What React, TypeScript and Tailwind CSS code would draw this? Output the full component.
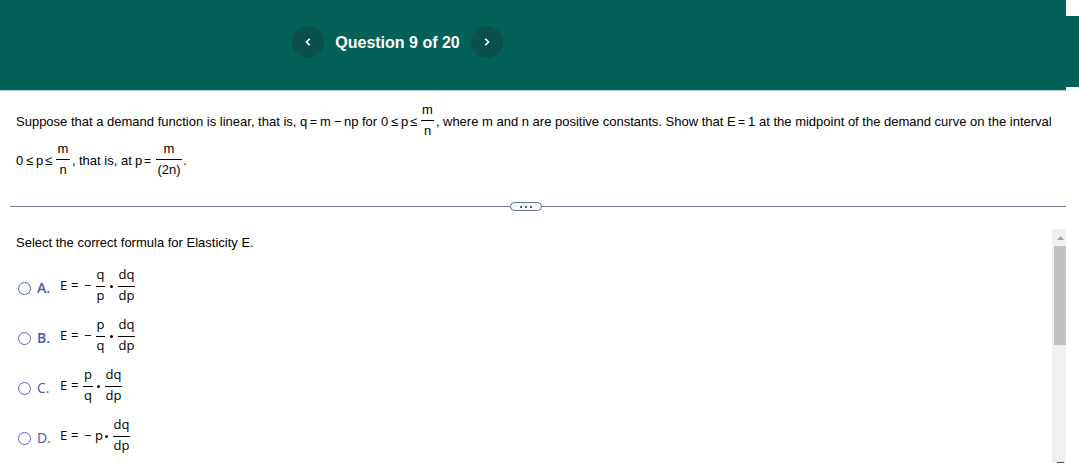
import { clsx } from "clsx";
import type { ReactNode } from "react";

function NavButton({ direction }: { direction: "prev" | "next" }) {
  return (
    <button
      aria-label={direction}
      className="flex size-8 items-center justify-center rounded-full bg-[#0b514b]"
    >
      <svg width="6" height="8" viewBox="0 0 6 8" fill="none" stroke="#fff" strokeWidth="1.6">
        <path d={direction === "prev" ? "M4.7 0.7 1.5 4l3.2 3.3" : "M1.3 0.7 4.5 4 1.3 7.3"} />
      </svg>
    </button>
  );
}

function Seg({ className, children }: { className?: string; children: ReactNode }) {
  return <span className={clsx("shrink-0 whitespace-pre", className)}>{children}</span>;
}

type FractionProps = { top: string; bottom: string; className: string; inline?: boolean };

// inline fractions sit in running text, where the bar is slightly higher
function Fraction({ top, bottom, className, inline }: FractionProps) {
  return (
    <span className={clsx("flex shrink-0 flex-col items-center", className)}>
      <span className={inline ? "h-[19px] leading-[18px]" : "h-5 leading-4"}>{top}</span>
      <span className="h-px w-full bg-black" />
      <span className={inline ? "h-[21px] leading-[19px]" : "h-5 leading-[17px]"}>{bottom}</span>
    </span>
  );
}

function Dot({ className }: { className: string }) {
  return <span className={clsx("size-[3px] shrink-0 rounded-full bg-black", className)} />;
}

function Choice({ letter, bold, children }: { letter: string; bold?: boolean; children: ReactNode }) {
  return (
    <label className="flex h-[50px] items-center font-['Open_Sans',sans-serif] text-[13px]">
      <span className="mt-1 size-[13px] shrink-0 rounded-full border border-[#5468bd]" />
      <span
        className={clsx(
          "mt-1 ml-[6px] w-[23px] shrink-0 text-sm text-[#4558ad]",
          bold ? "font-semibold" : "font-medium"
        )}
      >
        {letter}.
      </span>
      <span className="flex items-center">{children}</span>
    </label>
  );
}

export default function App() {
  return (
    <div className="flex h-[463px] w-[1079px] flex-col overflow-hidden bg-white font-['Liberation_Sans',Arial,sans-serif] text-[13px] text-black">
      <header className="flex h-[91px] shrink-0">
        <div className="flex w-[1066px] items-start border-b border-[#b5d5dc] bg-[#036157] pt-[26px] pl-[292px]">
          <NavButton direction="prev" />
          <h1 className="w-[147px] text-center text-base leading-[34px] font-bold text-white">
            Question 9 of 20
          </h1>
          <NavButton direction="next" />
        </div>
        <div className="mt-4 h-[71px] w-[13px] bg-[#036157]" />
      </header>

      <section className="h-[115px] shrink-0 pt-[10px] pl-4">
        <div className="flex h-10 items-center">
          <Seg className="w-[284px] pt-px">Suppose that a demand function is linear, that is,</Seg>
          <Seg className="w-[10px] pt-px">q</Seg>
          <Seg className="w-[10px] pt-px text-xs">=</Seg>
          <Seg className="w-[14px] pt-px">m</Seg>
          <Seg className="w-[10px] pt-px">−</Seg>
          <Seg className="w-[18px] pt-px">np</Seg>
          <Seg className="w-[19px] pt-px">for</Seg>
          <Seg className="w-[10px] pt-px">0</Seg>
          <Seg className="w-[10px] pt-px">≤</Seg>
          <Seg className="w-[9px] pt-px">p</Seg>
          <Seg className="w-[11px] pt-px">≤</Seg>
          <Fraction inline className="w-[13px]" top="m" bottom="n" />
          <Seg className="ml-[2px] w-[7px] pt-px">,</Seg>
          <Seg className="w-[284px] pt-px">where m and n are positive constants. Show that</Seg>
          <Seg className="w-[11px] pt-px">E</Seg>
          <Seg className="w-[10px] pt-px text-xs">=</Seg>
          <Seg className="w-[11px] pt-px">1</Seg>
          <Seg className="pt-px">at the midpoint of the demand curve on the interval</Seg>
        </div>
        <div className="flex h-[38px] items-center">
          <Seg className="w-[10px] pt-px">0</Seg>
          <Seg className="w-[10px] pt-px">≤</Seg>
          <Seg className="w-[9px] pt-px">p</Seg>
          <Seg className="w-[11px] pt-px">≤</Seg>
          <Fraction inline className="w-[14px]" top="m" bottom="n" />
          <Seg className="ml-[2px] w-[7px] pt-px">,</Seg>
          <Seg className="w-[56px] pt-px">that is, at</Seg>
          <Seg className="w-[9px] pt-px">p</Seg>
          <Seg className="w-[12px] pt-px text-xs">=</Seg>
          <Fraction inline className="w-[26px]" top="m" bottom="(2n)" />
          <Seg className="ml-[1px] pt-px">.</Seg>
        </div>
      </section>

      <div className="ml-[10px] flex h-[1px] w-[1056px] shrink-0 items-center justify-center bg-[#777b91]">
        <button
          aria-label="Resize"
          className="flex h-[9px] w-8 -translate-x-[12px] items-center justify-center gap-[3px] rounded-full border border-[#687386] bg-[#f4f8fc]"
        >
          <span className="size-[2px] bg-[#56616e]" />
          <span className="size-[2px] bg-[#56616e]" />
          <span className="size-[2px] bg-[#56616e]" />
        </button>
      </div>

      <main className="mt-[22px] flex min-h-0 flex-1">
        <div className="w-[1052px] shrink-0 pl-4">
          <p className="pt-1 leading-5">Select the correct formula for Elasticity E.</p>
          <div className="pt-[8px] pl-[2px]">
            <Choice letter="A" bold>
              <Seg className="w-[11px]">E</Seg>
              <Seg className="w-[13px]">=</Seg>
              <Seg className="w-[12px]">−</Seg>
              <Fraction className="w-[9px]" top="q" bottom="p" />
              <Dot className="mx-[5px]" />
              <Fraction className="w-[17px]" top="dq" bottom="dp" />
            </Choice>
            <Choice letter="B" bold>
              <Seg className="w-[11px]">E</Seg>
              <Seg className="w-[13px]">=</Seg>
              <Seg className="w-[12px]">−</Seg>
              <Fraction className="w-[9px]" top="p" bottom="q" />
              <Dot className="mx-[5px]" />
              <Fraction className="w-[17px]" top="dq" bottom="dp" />
            </Choice>
            <Choice letter="C">
              <Seg className="w-[11px]">E</Seg>
              <Seg className="w-[12px]">=</Seg>
              <Fraction className="w-[10px]" top="p" bottom="q" />
              <Dot className="mr-[5px] ml-[4px]" />
              <Fraction className="w-[17px]" top="dq" bottom="dp" />
            </Choice>
            <Choice letter="D">
              <Seg className="w-[11px]">E</Seg>
              <Seg className="w-[13px]">=</Seg>
              <Seg className="w-[11px]">−</Seg>
              <Seg className="w-[10px]">p</Seg>
              <Dot className="mr-[5px]" />
              <Fraction className="w-[17px]" top="dq" bottom="dp" />
            </Choice>
          </div>
        </div>

        <div className="flex w-[14px] flex-col items-center bg-[#f0f0f0]">
          <svg width="7" height="4" viewBox="0 0 7 4" className="mt-[7px] ml-[3px] shrink-0" fill="#a3a3a3">
            <path d="M3.5 0 7 4H0z" />
          </svg>
          <div className="mt-[6px] h-[99px] w-3 shrink-0 self-end bg-[#c1c1c1]" />
          <div className="mt-auto ml-[3px] h-px w-[7px] bg-[#505050]" />
        </div>
      </main>
    </div>
  );
}
